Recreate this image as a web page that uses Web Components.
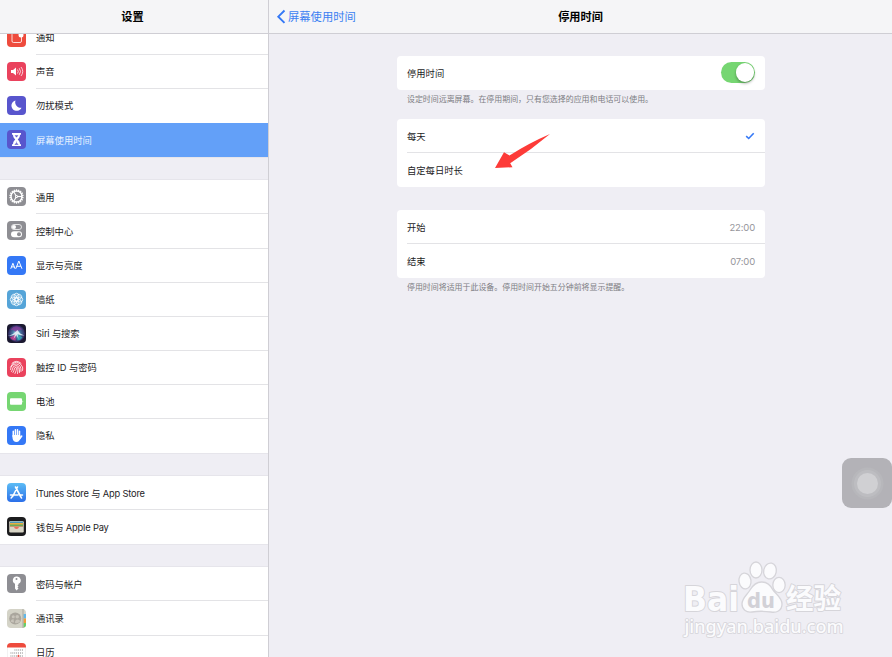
<!DOCTYPE html>
<html lang="zh-CN">
<head>
<meta charset="utf-8">
<title>设置</title>
<style>
html,body{margin:0;height:100%;overflow:hidden;background:#efeef4}
body{font-family:Inter,"Noto Sans CJK SC",sans-serif;color:#1c1c1e}
</style>
</head>
<body>
<settings-app></settings-app>
<script>
const bg = (c, inner) => `<rect width="38" height="38" rx="8" fill="${c}"/>${inner}`;
const spokes = (n, f) => Array.from({length: n}, (_, i) => f(i * 360 / n)).join('');
const ICONS = {
  notice: bg('#ee4b3d', '<path d="M22 10H13a3 3 0 0 0-3 3v13a3 3 0 0 0 3 3h13a3 3 0 0 0 3-3V17" fill="none" stroke="#fff" stroke-width="1.6"/><circle cx="28" cy="14" r="5" fill="#fff"/>'),
  sound: bg('#ea425d', '<path d="M8 16h4l6-5v16l-6-5H8z" fill="#fff"/><path d="M21 15q3 4 0 8M24.5 12.5q5 6.500 0 13M28 10q7 9 0 18" fill="none" stroke="#fff" stroke-width="1.500"/>'),
  moon: bg('#5855cd', '<path d="M17 9A10.500 10.500 0 1 0 29 23.500 11 11 0 0 1 17 9z" fill="#fff"/>'),
  hourglass: bg('#5855cd', '<path d="M10 6h18v3.500h-2c0 5-2 7-4.500 9.500C24 21.500 26 23.500 26 28.500h2V32H10v-3.500h2c0-5 2-7 4.500-9.500C14 16.500 12 14.500 12 9.500h-2z" fill="#fff"/><path d="M16 11h6l-3 3.500zM19 23v3l-3.500 3h7l-3.500-3" fill="#5855cd" stroke="#5855cd" stroke-width=".8"/>'),
  gear: bg('#8e8e93', `<circle cx="19" cy="19" r="11" fill="none" stroke="#fff" stroke-width="2.800"/>${spokes(18, a => `<path d="M17.800 4.500h2.400v4h-2.400z" fill="#fff" transform="rotate(${a} 19 19)"/>`)}${spokes(3, a => `<path d="M19 19h11" stroke="#fff" stroke-width="2.200" transform="rotate(${a} 19 19)"/>`)}<circle cx="19" cy="19" r="3" fill="#fff"/><circle cx="19" cy="19" r="1.200" fill="#8e8e93"/>`),
  control: bg('#8e8e93', '<rect x="9" y="7" width="20" height="10" rx="5" fill="none" stroke="#fff" stroke-width="1.500"/><circle cx="14" cy="12" r="4" fill="#fff"/><rect x="8" y="20.500" width="22" height="12" rx="6" fill="#fff"/><circle cx="24" cy="26.500" r="4" fill="#8e8e93"/>'),
  display: bg('#3478f6', '<path d="M7.500 25.500l4.300-11 4.300 11M9 21.800h5.600M17.500 25.500l6.200-15.500 6.200 15.500M19.600 20.500h8.200" fill="none" stroke="#fff" stroke-width="2"/>'),
  wallpaper: bg('#55a4d8', `${spokes(8, a => `<circle cx="19" cy="11.500" r="5" fill="#fff" fill-opacity=".12" stroke="#fff" stroke-width="1.500" transform="rotate(${a} 19 19)"/>`)}<circle cx="19" cy="19" r="4" fill="none" stroke="#fff" stroke-width="1.500"/>`),
  siri: `<defs><radialGradient id="s"><stop offset="0" stop-color="#a8e7ef"/><stop offset=".45" stop-color="#487aa5"/><stop offset="1" stop-color="#30245c"/></radialGradient></defs>` + bg('#1b1930', '<circle cx="19" cy="19" r="17" fill="url(#s)"/><path d="M7 11Q19-2 31 11q-6-1-12 6-6-6-12-6z" fill="#8e3a9c" fill-opacity=".75"/><path d="M6 27q8-3 13-10l-2 16q-7 0-11-6z" fill="#cf3d8f" fill-opacity=".8"/><path d="M20 20l11 7q-4 6-10 6z" fill="#32b5be" fill-opacity=".75"/><path d="M3 24Q13 21 21 12q4 8 14 11-9 0-14-3l2 10-4-8-6 8 3-9q-5 3-13 2z" fill="#e9f6fa" fill-opacity=".85"/>'),
  touch: bg('#ea425d', '<g fill="none" stroke="#fff" stroke-width="1.600" stroke-linecap="round"><path d="M10 10.500Q19 2.500 28 10.500M7 18Q11 8 19 8.500T31 18q1 4 0 7M7 23q1-11 12-11 10 1 9 15M9 27q2-3 2-6 1-6 8-6 6 1 6 8v6M12 29q3-5 3-9 4-4 7 0 0 6-1 11M16 31q3-6 3-10"/></g>'),
  battery: bg('#76d672', '<rect x="6" y="12.500" width="24" height="13" rx="2" fill="#fff"/><path d="M31 16.500q3 2.500 0 5z" fill="#fff"/>'),
  hand: bg('#3478f6', '<g fill="none" stroke="#fff" stroke-width="3" stroke-linecap="round"><path d="M12.500 21V10.500M16.800 20V7.500M21 20V7.500M25 21V10.500M25 26l4.500-6"/></g><path d="M11 18h15.500v4l2.500-1-5 9q-2 2-5 2-7 0-8-8z" fill="#fff"/>'),
  store: '<defs><linearGradient id="g" x2="0" y2="1"><stop stop-color="#5cbcf5"/><stop offset="1" stop-color="#2b6fe9"/></linearGradient></defs>' + bg('url(#g)', '<path d="M21 8L11 27.500M17 8l10.500 19.500M7 24h15M27 24h4M9.500 28l-1 2M29 30l-1-2" fill="none" stroke="#fff" stroke-width="3.200" stroke-linecap="round"/>'),
  wallet: bg('#1c1c1e', '<rect x="4.500" y="8" width="29" height="23" rx="2.500" fill="#d8d5c6"/><rect x="6" y="9" width="26" height="4" fill="#4c97b8"/><rect x="6" y="12" width="26" height="4" fill="#e8ae42"/><rect x="6" y="15" width="26" height="4" fill="#6aaa57"/><path d="M6 19h26v1h-8q-1 4-5 4t-5-4H6z" fill="#ea6f5d"/>'),
  key: bg('#8e8e93', '<path fill-rule="evenodd" d="M19 5a7.500 7.500 0 0 0-3 14.300V29l3 4 4-4-2-2 2-2-2-2 2-2v-1.700A7.500 7.500 0 0 0 19 5zm0 3a2 2 0 1 1 0 4 2 2 0 0 1 0-4z" fill="#fff"/>'),
  contacts: bg('#d4d3c7', '<path d="M33 10h5v9h-5z" fill="#62b8e8"/><path d="M33 19h5v9h-5z" fill="#ef9d3c"/><path d="M33 28h5v3q0 6-5 6z" fill="#66cf65"/><path d="M32 0v38" stroke="#aaa99f" stroke-width="2"/><circle cx="16.500" cy="19" r="12" fill="#aaa69d"/><circle cx="12.500" cy="15.500" r="3" fill="#c8c4ba"/><circle cx="20.500" cy="15.500" r="3.500" fill="#c8c4ba"/><path d="M7 25q1-5 6-5l1 7q-4 0-7-2zM16 28q0-7 5-7t5 4q-4 5-10 3z" fill="#c8c4ba"/>'),
  calendar: `<rect x=".5" y=".5" width="37" height="37" rx="8" fill="#fff" stroke="#ddd"/><path d="M0 9V8a8 8 0 0 1 8-8h22a8 8 0 0 1 8 8v1z" fill="#ee4b3d"/><g stroke="#555" stroke-width="1.600" stroke-dasharray="1.800 2"><path d="M15 14h18M7 20h26M7 26h26M7 32h20"/></g><path d="M20.500 26h5M23 23.500v5" stroke="#ee4b3d" stroke-width="1.800"/>`
};

function define(name, css, html) {
  customElements.define(name, class extends HTMLElement {
    connectedCallback() {
      if (this.shadowRoot) return;
      const root = this.attachShadow({mode: 'open'});
      root.innerHTML = `<style>*{box-sizing:border-box}${css}</style>${typeof html === 'function' ? html(this) : html}`;
    }
  });
}

define('app-icon', ':host{display:block;width:19px;height:19px;flex:none}svg{display:block}',
  el => `<svg width="19" height="19" viewBox="0 0 38 38">${ICONS[el.getAttribute('name')]}</svg>`);

define('nav-bar', `:host{display:flex;height:33.500px;flex:none;background:#f5f5f7;border-bottom:1px solid #cfced4;
  align-items:center;position:relative;z-index:1;padding-top:1px;box-sizing:border-box}
  .side{flex:1;display:flex;align-items:center;padding-left:7px}
  b{font-size:11.200px;font-weight:600;color:#000;white-space:nowrap;line-height:16px}
  :host([narrow]) b{margin-left:-3px}`,
  '<div class="side"><slot name="back"></slot></div><b><slot></slot></b><div class="side"></div>');

define('back-link', `:host{display:flex;align-items:center;gap:2px;color:#3b7ff2;font-size:11.300px;line-height:16px;white-space:nowrap}svg{display:block}`,
  '<svg width="10" height="16" viewBox="0 0 10 16"><path d="M8.500 1.500L2.300 7.700l6.200 6.200" fill="none" stroke="#3478f6" stroke-width="1.900"/></svg><span><slot></slot></span>');

define('menu-row', `:host{display:flex;height:34.130px;align-items:center;padding-left:7px;background:#fff;font-size:9.300px;line-height:14px}
  :host([selected]){background:#63a0f8;color:#e8f1ff}
  :host([tight]){letter-spacing:-.17px}
  app-icon{margin-top:-1px}
  .label{flex:1;align-self:stretch;display:flex;align-items:center;margin-left:10px;padding-top:1.500px;border-bottom:1px solid #e3e3e6;white-space:pre}
  :host(:last-of-type) .label,:host([plain]) .label{border-color:transparent}`,
  el => `<app-icon name="${el.getAttribute('icon')}"></app-icon><div class="label"><span><slot></slot></span></div>`);

define('menu-group', ':host{display:block;box-shadow:0 0 0 .5px #dddde2}', '<slot></slot>');

define('side-bar', `:host{display:flex;flex-direction:column;width:269px;box-sizing:border-box;border-right:1px solid #cfced4;overflow:hidden;background:#efeef4}
  .view{flex:1;min-height:0;overflow:hidden}
  .list{display:flex;flex-direction:column;gap:22.900px;margin-top:-12.600px}`,
  `<nav-bar narrow>设置</nav-bar><div class="view"><div class="list">
  <menu-group><menu-row icon="notice">通知</menu-row><menu-row icon="sound">声音</menu-row><menu-row icon="moon" plain>勿扰模式</menu-row><menu-row icon="hourglass" selected>屏幕使用时间</menu-row></menu-group>
  <menu-group><menu-row icon="gear">通用</menu-row><menu-row icon="control">控制中心</menu-row><menu-row icon="display">显示与亮度</menu-row><menu-row icon="wallpaper">墙纸</menu-row><menu-row icon="siri" tight>Siri 与搜索</menu-row><menu-row icon="touch">触控 ID 与密码</menu-row><menu-row icon="battery">电池</menu-row><menu-row icon="hand">隐私</menu-row></menu-group>
  <menu-group><menu-row icon="store" tight>iTunes Store 与 App Store</menu-row><menu-row icon="wallet" tight>钱包与 Apple Pay</menu-row></menu-group>
  <menu-group><menu-row icon="key">密码与帐户</menu-row><menu-row icon="contacts">通讯录</menu-row><menu-row icon="calendar">日历</menu-row></menu-group>
  </div></div>`);

define('toggle-switch', `:host{display:flex;justify-content:flex-end;align-items:center;box-sizing:border-box;width:34px;height:21px;border-radius:11px;background:#76d672;padding:1px}
  i{width:18.500px;height:18.500px;border-radius:50%;background:#fff;box-shadow:0 1.500px 3px #0005}`, '<i></i>');

define('setting-row', `:host{display:flex;height:34.100px;box-sizing:border-box;padding-left:10px;font-size:9.300px;line-height:14px}
  .in{flex:1;display:flex;align-items:center;justify-content:space-between;padding-right:10px;border-bottom:1px solid #e3e3e6}
  .text{padding-top:3px}
  :host(:last-of-type) .in{border-color:transparent}`,
  '<div class="in"><span class="text"><slot></slot></span><slot name="end"></slot></div>');

define('setting-card', `:host{display:block}.card{background:#fff;border-radius:4px}
  .note{padding:3px 10px 0;font-size:7.950px;line-height:12px;color:#7d7d83;white-space:nowrap}`,
  el => `<div class="card"><slot></slot></div>${el.hasAttribute('note') ? `<div class="note">${el.getAttribute('note')}</div>` : ''}`);

define('detail-pane', `:host{display:flex;flex-direction:column;flex:1;min-width:0;background:#efeef4}
  .cards{width:368px;margin:22.500px 0 0 128px;display:flex;flex-direction:column;gap:22.900px}
  .first{margin-bottom:-9.100px}
  .val{color:#96969b;font-size:9.500px;letter-spacing:-.15px;padding-top:3px}svg{display:block;margin-top:1px}`,
  `<nav-bar><back-link slot="back">屏幕使用时间</back-link>停用时间</nav-bar>
  <div class="cards">
  <setting-card class="first" note="设定时间远离屏幕。在停用期间，只有您选择的应用和电话可以使用。"><setting-row>停用时间<toggle-switch slot="end"></toggle-switch></setting-row></setting-card>
  <setting-card><setting-row>每天<svg slot="end" width="10" height="8" viewBox="0 0 10 8"><path d="M1.200 4.200l2.500 2.300L8.700 1.200" fill="none" stroke="#3478f6" stroke-width="1.600"/></svg></setting-row><setting-row>自定每日时长</setting-row></setting-card>
  <setting-card note="停用时间将适用于此设备。停用时间开始五分钟前将显示提醒。"><setting-row>开始<span class="val" slot="end">22:00</span></setting-row><setting-row>结束<span class="val" slot="end">07:00</span></setting-row></setting-card>
  </div>`);

define('pointer-arrow', ':host{position:absolute;left:494px;top:132px;z-index:2}svg{display:block}',
  '<svg width="58" height="38" viewBox="494 132 58 38"><path d="M550 134Q529 143 509.500 155.500L504 152.300 495 168l17.500-.8-2.300-4Q531 150 550 134z" fill="#fd3b38"/></svg>');

define('assistive-button', `:host{position:absolute;left:842px;top:458px;width:50px;height:50px;border-radius:9px;background:#b3b2b7;display:grid;place-items:center}
  i{width:21px;height:21px;border-radius:50%;background:#d0d0d3;box-shadow:0 0 0 3px #bdbdc1,0 0 0 5.500px #b7b7bb}`, '<i></i>');

define('page-watermark', ':host{position:absolute;left:670px;top:550px}svg{display:block}text{paint-order:stroke;stroke-linejoin:round}',
  `<svg width="190" height="100" viewBox="0 0 190 100" fill="#fbfbfd" stroke="#d6d5da" stroke-width="2">
  <text x="13" y="61" font-family="DejaVu Sans" font-weight="700" font-size="34" textLength="56" lengthAdjust="spacingAndGlyphs">Bai</text>
  <g stroke-width="1.300"><ellipse cx="75" cy="31" rx="6" ry="8" transform="rotate(-8 75 31)"/><ellipse cx="86" cy="20" rx="6" ry="8"/><ellipse cx="100" cy="21" rx="6.300" ry="8" transform="rotate(12 100 21)"/><ellipse cx="109" cy="35" rx="6.200" ry="7.700"/>
  <path d="M91.500 32C97 32 101 36 103 40c4 5 9 8 9 14 0 7-6 9-11 8-7-1-13-1-19 0-6 1-10-3-10-8 0-6 5-9 8-14 3-5 6-8 11.500-8z"/></g>
  <text x="77" y="58" font-family="DejaVu Sans" font-weight="700" font-size="22" stroke="none" fill="#d2d1d7" textLength="28" lengthAdjust="spacingAndGlyphs">du</text>
  <text x="116" y="59" font-family="Noto Sans CJK SC" font-weight="700" font-size="28" textLength="55" lengthAdjust="spacingAndGlyphs">经验</text>
  <text x="14.500" y="82.500" font-family="Noto Sans" font-weight="500" font-size="18" stroke-width="1.700" textLength="159" lengthAdjust="spacingAndGlyphs">jingyan.baidu.com</text></svg>`);

define('settings-app', ':host{display:flex;position:relative;width:892px;height:657px;overflow:hidden}',
  '<side-bar></side-bar><detail-pane></detail-pane><pointer-arrow></pointer-arrow><assistive-button></assistive-button><page-watermark></page-watermark>');
</script>
</body>
</html>
